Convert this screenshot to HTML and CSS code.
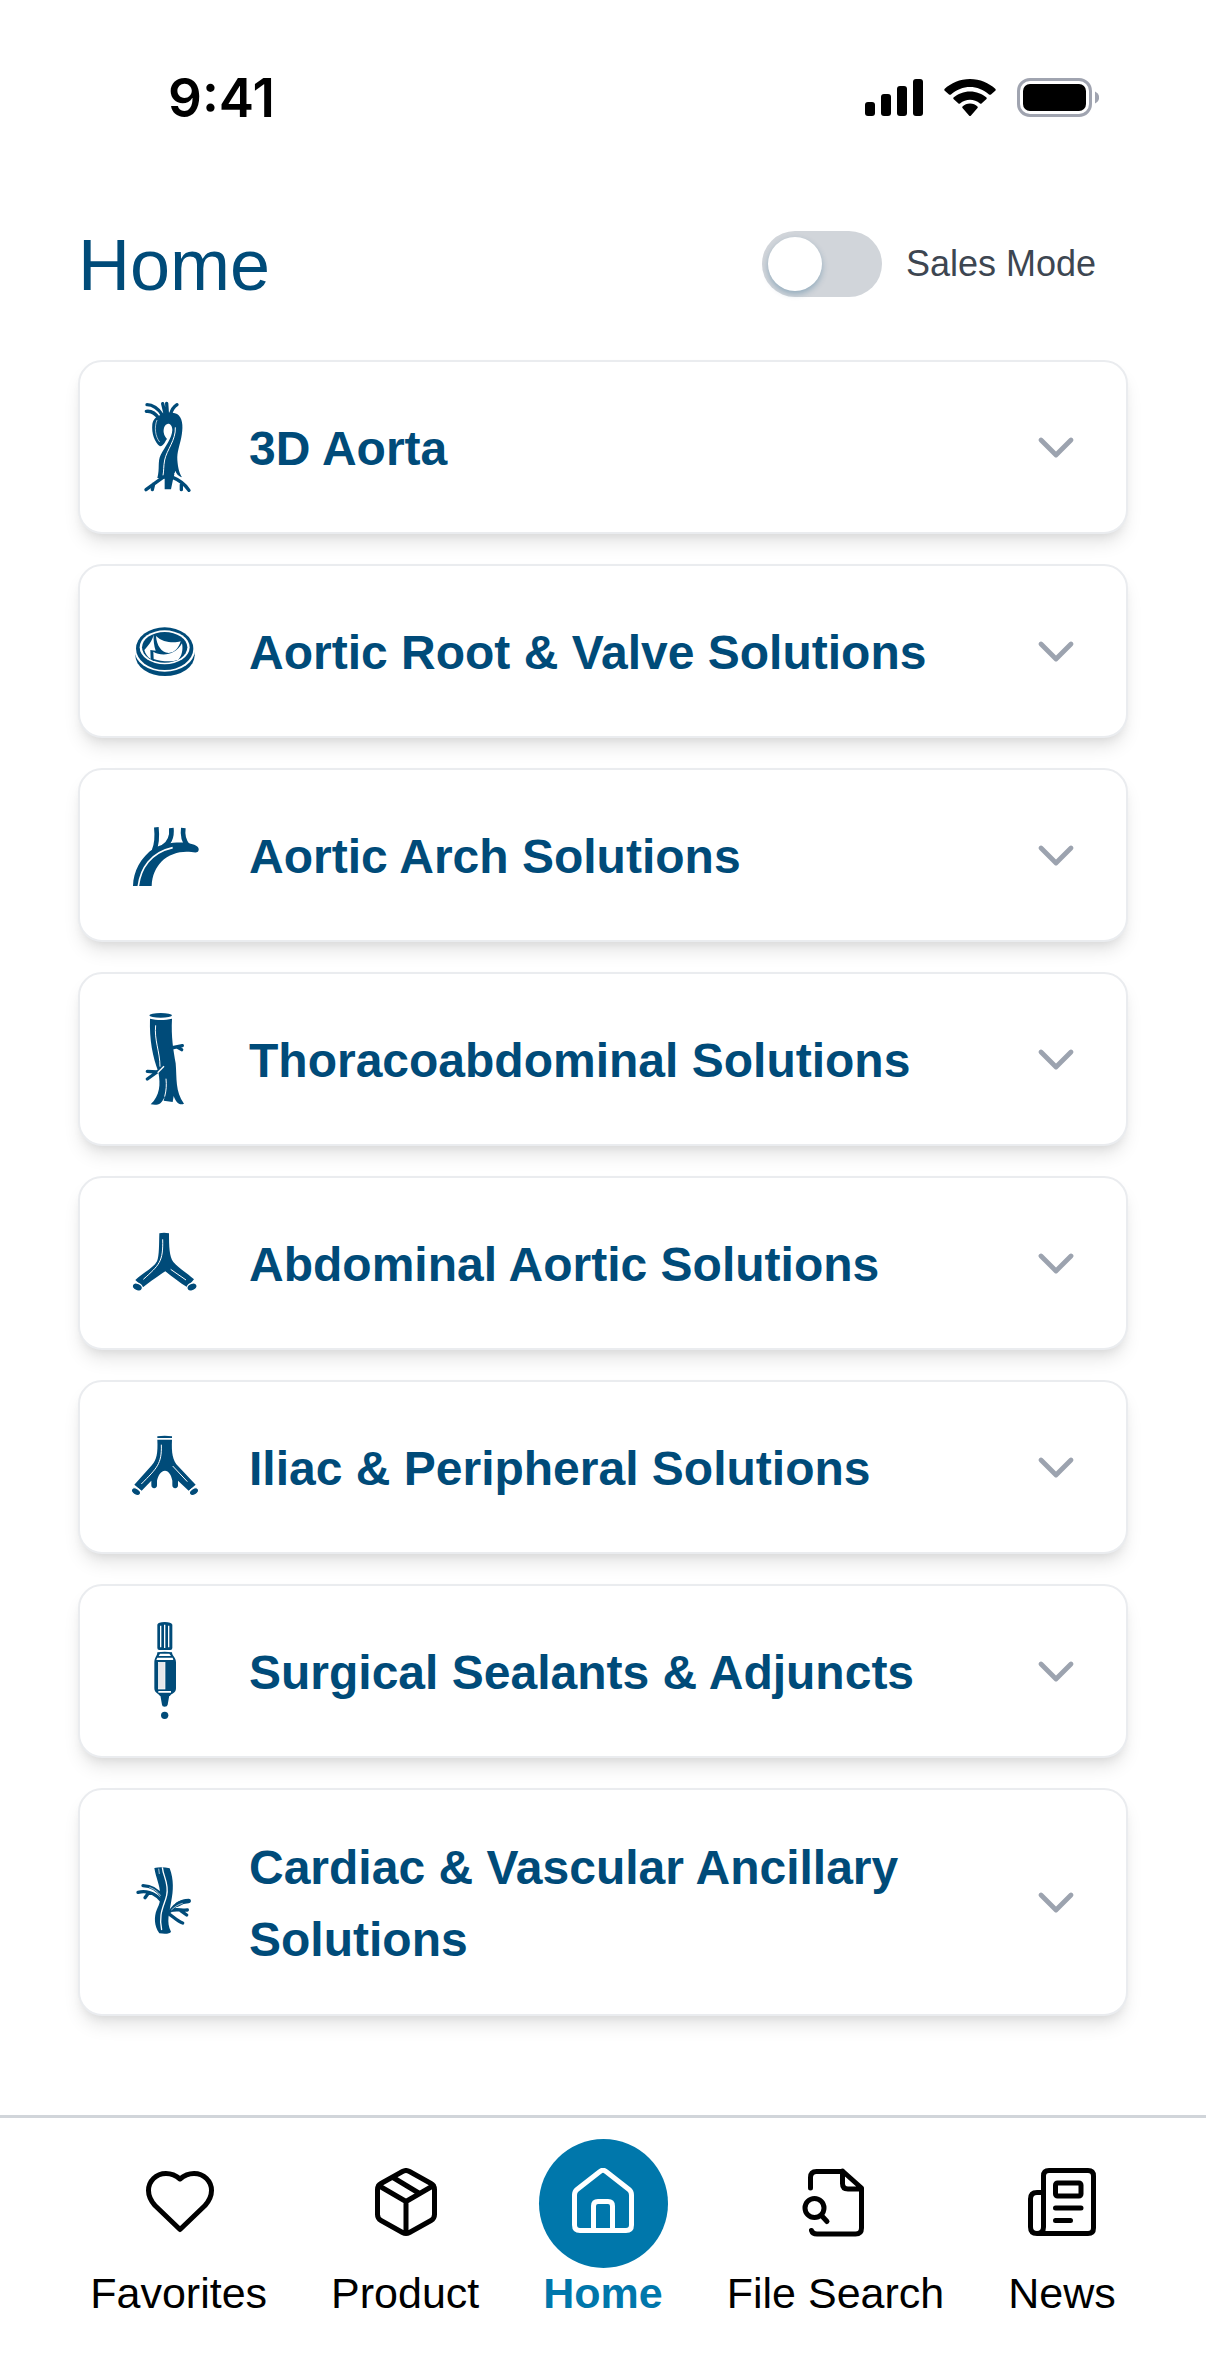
FILE: index.html
```html
<!DOCTYPE html>
<html lang="en">
<head>
  <meta charset="UTF-8" />
  <meta name="viewport" content="width=device-width, initial-scale=1.0"/>
  <title>Home</title>
  <link rel="stylesheet" href="styles.css">
</head>
<body>
  <div class="app">
    <div class="status-bar">
      <span class="time">9:41</span>
      <div class="status-icons">
        <svg width="58" height="37" viewBox="0 0 58 37">
          <rect x="0" y="23" width="10" height="14" rx="3"/>
          <rect x="16" y="15" width="10" height="22" rx="3"/>
          <rect x="32" y="7" width="10" height="30" rx="3"/>
          <rect x="48" y="0" width="10" height="37" rx="3"/>
        </svg>
        <svg width="52" height="37" viewBox="0 0 52 37">
          <path d="M26 0C36 0 45 4 51.500 10Q52 11 51.500 11.500L47 15.500Q46 16 45 15.500C34 5.500 18 5.500 7 15.500Q6 16 5 15.500L.5 11.500Q0 11 .5 10C7 4 16 0 26 0Z"/>
          <path d="M26 12.500C32.500 12.500 38 15 42.500 18.500Q43 19.500 42.500 20L37.500 24.500Q37 25 36 24.500C30 19.500 22 19.500 16 24.500Q15 25 14.500 24.500L9.500 20Q9 19.500 9.500 18.500C14 15 19.500 12.500 26 12.500Z"/>
          <path d="M26 24.500C29 24.500 31.500 25.500 33.500 27.500Q34 28.500 33.500 29L27 36.500Q26 37.500 25 36.500L18.500 29Q18 28.500 18.500 27.500C20.500 25.500 23 24.500 26 24.500Z"/>
        </svg>
        <svg width="82" height="39" viewBox="0 0 82 39">
          <rect x="1.500" y="1.500" width="72" height="36" rx="11.500" fill="none" stroke="#a0a4b0" stroke-width="3"/>
          <rect x="6" y="6" width="63" height="27" rx="7"/>
          <path d="M78 13.500V25.500C83.500 23 83.500 16 78 13.500Z" fill="#a0a4b0"/>
        </svg>
      </div>
    </div>

    <header class="header">
      <h1>Home</h1>
      <div class="sales-mode">
        <input type="checkbox" id="sales-mode" class="toggle">
        <label for="sales-mode">Sales Mode</label>
      </div>
    </header>

    <main class="cards">
      <button class="card" type="button">
        <svg class="card-icon" viewBox="30 36 270 270">
          <path d="M150 169C134 158 124 130 127 102C129 90 138 80 150 76C162 66 195 64 206 76C220 90 219 118 214 142C208 172 201 185 202 210C204 235 208 250 216 262C206 260 199 252 196 242L190 264L183 298H164V266L142 264C150 235 142 215 152 195C165 170 186 145 187 120C187 106 180 101 174 101C164 103 160 115 161 127C162 135 166 142 171 147C166 152 162 168 150 169Z"/>
          <path class="line" stroke-width="10" d="M111 44C127 44 146 56 156 74M109 64C124 62 138 72 147 86M158 41L165 70M170 40L172 70M201 44C192 50 185 60 182 72M162 260L108 299M131 282L127 299M188 262C208 270 226 284 237 301M214 284V299"/>
          <path class="cut" stroke-width="3" d="M196 112C198 150 170 180 164 210C160 230 162 242 159 256"/>
          <path class="cut" stroke-width="2" d="M141 90C132 112 136 140 149 156M192 250L214 264"/>
        </svg>
        <span class="card-title">3D Aorta</span>
        <svg class="chevron" viewBox="0 0 24 24"><path d="M4.500 8.500L12 16L19.500 8.500"/></svg>
      </button>

      <button class="card" type="button">
        <svg class="card-icon" viewBox="30 18 270 270">
          <ellipse cx="165" cy="166" rx="89" ry="62"/>
          <ellipse cx="164" cy="152" rx="90" ry="63" fill="#fff"/>
          <ellipse cx="164" cy="146" rx="86" ry="64"/>
          <ellipse cx="164" cy="142" rx="75" ry="51" fill="#fff"/>
          <ellipse cx="164" cy="142" rx="68" ry="46"/>
          <path fill="#fff" d="M131 104C127 122 114 138 103 150C106 162 112 170 122 177L121 150L137 152C132 138 130 120 131 104Z"/>
          <path fill="#fff" d="M138 108C158 128 192 130 212 124C206 144 194 158 176 159C154 158 140 136 138 108Z"/>
          <path fill="#fff" d="M130 155C152 169 196 168 216 130C220 150 215 170 204 180C184 187 152 184 131 177Z"/>
        </svg>
        <span class="card-title">Aortic Root &amp; Valve Solutions</span>
        <svg class="chevron" viewBox="0 0 24 24"><path d="M4.500 8.500L12 16L19.500 8.500"/></svg>
      </button>

      <button class="card" type="button">
        <svg class="card-icon" viewBox="30 30 270 270">
          <path d="M69 258C70 215 92 172 132 145C160 128 215 124 242 131C258 135 268 140 266 150C264 160 254 157 244 156C215 152 178 160 154 185C138 202 126 225 125 258Z"/>
          <path class="line butt" stroke-width="14" d="M139 82C142 110 142 130 132 152M184 84C187 112 178 130 158 142M220 84C217 105 220 122 234 138"/>
          <path class="cut" stroke-width="5" d="M85 258C92 205 122 158 188 143"/>
        </svg>
        <span class="card-title">Aortic Arch Solutions</span>
        <svg class="chevron" viewBox="0 0 24 24"><path d="M4.500 8.500L12 16L19.500 8.500"/></svg>
      </button>

      <button class="card" type="button">
        <svg class="card-icon" viewBox="30 42 270 270">
          <ellipse cx="152" cy="46" rx="34" ry="7"/>
          <path d="M120 56C140 61 165 61 186 56C183 110 190 150 197 190C201 235 195 275 222 311C208 318 197 305 191 288L188 306L161 302L164 290C154 314 142 317 122 313C150 285 152 255 145 215C128 170 118 120 120 56Z"/>
          <path class="line" stroke-width="10" d="M184 144L217 137M203 142L215 149M158 204L112 237M140 216L112 214"/>
          <path class="cut" stroke-width="3" d="M137 76C132 120 150 155 150 200M168 236C170 256 169 270 164 290"/>
          <path class="cut" stroke-width="4" d="M162 199L143 218"/>
        </svg>
        <span class="card-title">Thoracoabdominal Solutions</span>
        <svg class="chevron" viewBox="0 0 24 24"><path d="M4.500 8.500L12 16L19.500 8.500"/></svg>
      </button>

      <button class="card" type="button">
        <svg class="card-icon" viewBox="30 24 270 270">
          <path d="M148 70Q162 67 177 70C177 110 178 140 190 156C205 174 232 190 252 208L232 232C208 217 185 200 166 184C148 196 122 214 99 232L76 210C98 188 130 175 141 154C148 138 147 100 148 70Z"/>
          <ellipse class="ring" cx="82" cy="231" rx="16" ry="11" transform="rotate(26 82 231)"/>
          <ellipse class="ring" cx="246" cy="231" rx="16" ry="11" transform="rotate(-26 246 231)"/>
          <path class="cut" stroke-width="3" d="M158 88C160 155 148 165 100 208M182 178L228 210"/>
        </svg>
        <span class="card-title">Abdominal Aortic Solutions</span>
        <svg class="chevron" viewBox="0 0 24 24"><path d="M4.500 8.500L12 16L19.500 8.500"/></svg>
      </button>

      <button class="card" type="button">
        <svg class="card-icon" viewBox="30 636 270 270">
          <path d="M142 679Q164 676 186 679V684H142Z"/>
          <path d="M142 689H186C184 728 188 752 204 768L257 824L236 842L204 812V826A8 8 0 0 1 187 826V812C184 795 176 782 165 782C152 782 144 798 141 812V826A8 8 0 0 1 124 826V812L95 842L73 824L126 765C140 750 144 728 142 689Z"/>
          <ellipse class="ring" cx="78" cy="845" rx="15" ry="10" transform="rotate(32 78 845)"/>
          <ellipse class="ring" cx="252" cy="845" rx="15" ry="10" transform="rotate(-32 252 845)"/>
          <path class="cut" stroke-width="3" d="M154 704C156 762 140 775 94 822M188 768L232 815"/>
        </svg>
        <span class="card-title">Iliac &amp; Peripheral Solutions</span>
        <svg class="chevron" viewBox="0 0 24 24"><path d="M4.500 8.500L12 16L19.500 8.500"/></svg>
      </button>

      <button class="card" type="button">
        <svg class="card-icon" viewBox="30 48 270 270">
          <path d="M142 44Q144 36 164 36T187 44V114Q187 120 181 120H148Q142 120 142 114Z"/>
          <path class="cut" stroke-width="4" d="M152 47V112M164 44V114M176 47V112"/>
          <path d="M142 127Q164 124 186 127C186 138 198 142 198 158V235C198 250 184 250 180 258H150C145 250 133 248 133 235V158C133 142 142 138 142 127Z"/>
          <path fill="#fff" d="M150 131H178L183 138H146ZM142 143H188L190 150H139ZM145 243H183V248H145Z"/>
          <rect x="145" y="157" width="20" height="80" fill="#e5e7eb" stroke="#fff" stroke-width="2"/>
          <path d="M151 256H178L173 284Q172 290 164 290T156 284Z"/>
          <circle cx="164" cy="316" r="11"/>
        </svg>
        <span class="card-title">Surgical Sealants &amp; Adjuncts</span>
        <svg class="chevron" viewBox="0 0 24 24"><path d="M4.500 8.500L12 16L19.500 8.500"/></svg>
      </button>

      <button class="card" type="button">
        <svg class="card-icon" viewBox="30 21 270 270">
          <path d="M133 54Q155 49 179 55C192 88 190 125 184 152C178 190 168 215 183 245Q178 254 148 250C132 228 132 200 140 180C150 160 152 150 150 130C150 105 138 85 133 54Z"/>
          <path class="line" stroke-width="10" d="M99 107C122 108 142 118 157 140M84 127C105 122 132 126 152 150M116 128L105 143M180 184C194 164 215 152 237 153M182 181C202 176 215 182 232 180M212 182L230 195M174 190C188 198 202 214 218 219"/>
          <path class="line" stroke-width="13" d="M202 164C214 156 224 153 236 153"/>
          <path class="cut" stroke-width="4" d="M157 52C160 82 178 100 170 136C164 165 144 190 155 240"/>
          <path class="cut" stroke-width="2" d="M146 56L148 72M118 112C134 117 144 126 152 137M184 180C195 170 205 163 218 160"/>
        </svg>
        <span class="card-title">Cardiac &amp; Vascular Ancillary Solutions</span>
        <svg class="chevron" viewBox="0 0 24 24"><path d="M4.500 8.500L12 16L19.500 8.500"/></svg>
      </button>
    </main>

    <nav class="bottom-nav">
      <a href="#" class="nav-item">
        <span class="nav-icon">
          <svg viewBox="0 0 72 72"><path d="M37 11C33 7.500 28 5.500 23 5.500C13 5.500 5.500 13 5.500 22.500C5.500 28.500 8 33 12 37.500L37 61.500L62 37.500C66 33 68.500 28.500 68.500 22.500C68.500 13 61 5.500 51 5.500C46 5.500 41 7.500 37 11Z"/></svg>
        </span>
        Favorites
      </a>
      <a href="#" class="nav-item">
        <span class="nav-icon">
          <svg viewBox="-1 0 72 72"><path d="M32.500 3.500Q36 1.500 39.500 3.500L61 15.500Q64.500 17.500 64.500 21.500V46.500Q64.500 50.500 61 52.500L39.500 64.500Q36 66.500 32.500 64.500L11 52.500Q7.500 50.500 7.500 46.500V21.500Q7.500 17.500 11 15.500ZM8.500 17.500L36 33.500L63.500 17.500M36 33.500V65.500M23 9.500L49.500 25.500"/></svg>
        </span>
        Product
      </a>
      <a href="#" class="nav-item active">
        <span class="nav-icon">
          <svg viewBox="0 0 72 72"><path d="M33 3.500Q36 1 39 3.500L62 21.500Q64.500 23.500 64.500 27V57Q64.500 62.500 59 62.500H13Q7.500 62.500 7.500 57V27Q7.500 23.500 10 21.500ZM26.500 62.500V38Q26.500 33.500 31 33.500H41Q45.500 33.500 45.500 38V62.500"/></svg>
        </span>
        Home
      </a>
      <a href="#" class="nav-item">
        <span class="nav-icon">
          <svg viewBox="-1 0 72 72"><path d="M10.500 20V9.500Q10.500 3.500 16.500 3.500H43L61.500 20V60Q61.500 66 55.500 66H17Q12.500 66 11.500 62.500M42.500 3V15.500Q42.500 21 48 21H61.500"/><circle cx="14.500" cy="40" r="9.500"/><path d="M21.500 47.500L27 53.500"/></svg>
        </span>
        File Search
      </a>
      <a href="#" class="nav-item">
        <span class="nav-icon">
          <svg viewBox="0 0 72 72"><path d="M11 65.500H62Q67.500 65.500 67.500 60V8Q67.500 2.500 62 2.500H23Q17.500 2.500 17.500 8V59Q17.500 65.500 11 65.500Q4.500 65.500 4.500 59V31Q4.500 24.500 11 24.500H17.500M29.500 40H55M29.500 52.500H44.500"/><rect x="29.500" y="15" width="25.500" height="13" rx="2"/></svg>
        </span>
        News
      </a>
    </nav>
  </div>
</body>
</html>
```
FILE: styles.css
```css
:root {
  --primary: #004b79;
  --accent: #0077ab;
  --border: #eaecef;
  --line: #d1d5da;
  --muted: #9ca3af;
  --text: #3d4651;
}

* {
  box-sizing: border-box;
}

body {
  margin: 0;
  background: #fff;
  color: #000;
  font-family: "Liberation Sans", Arial, sans-serif;
}

.app {
  display: flex;
  flex-direction: column;
  min-height: 100vh;
}

/* Status bar */
.status-bar {
  display: flex;
  align-items: center;
  justify-content: space-between;
  height: 195px;
  padding: 0 107px 0 168px;
}

.time {
  font-family: Inter, sans-serif;
  font-size: 53px;
  font-weight: 600;
}

.status-icons {
  display: flex;
  align-items: center;
  gap: 21px;
}

/* Header */
.header {
  display: flex;
  align-items: center;
  justify-content: space-between;
  padding: 20px 110px 47px 78px;
}

.header h1 {
  margin: 0;
  padding-top: 2px;
  color: var(--primary);
  font-size: 72px;
  font-weight: 400;
  line-height: 96px;
}

.sales-mode {
  display: flex;
  align-items: center;
  gap: 24px;
  color: var(--text);
  font-size: 36px;
}

.toggle {
  appearance: none;
  width: 120px;
  height: 66px;
  margin: 0;
  padding: 6px;
  border-radius: 33px;
  background: var(--line);
  cursor: pointer;
}

.toggle::before {
  content: "";
  display: block;
  width: 54px;
  height: 54px;
  border-radius: 50%;
  background: #fff;
  box-shadow: 0 3px 6px rgba(0, 75, 121, 0.3);
}

.toggle:checked {
  background: var(--accent);
}

.toggle:checked::before {
  margin-left: auto;
}

/* Category cards */
.cards {
  display: flex;
  flex-direction: column;
  gap: 30px;
  padding: 0 78px 99px;
}

.card {
  display: flex;
  align-items: center;
  gap: 39px;
  width: 100%;
  min-height: 174px;
  padding: 38px 46px 38px 40px;
  border: 2px solid var(--border);
  border-radius: 24px;
  background: #fff;
  box-shadow: 0 12px 18px -3px rgba(0, 0, 0, 0.1), 0 6px 12px -6px rgba(0, 0, 0, 0.1);
  color: var(--primary);
  font-family: inherit;
  text-align: left;
  cursor: pointer;
}

.card-title {
  flex: 1;
  padding-top: 4px;
  font-size: 48px;
  font-weight: 700;
  line-height: 72px;
}

.card-icon {
  flex: none;
  width: 90px;
  height: 90px;
  overflow: visible;
  fill: currentColor;
}

.card-icon .line {
  fill: none;
  stroke: currentColor;
  stroke-linecap: round;
}

.card-icon .butt {
  stroke-linecap: butt;
}

.card-icon .cut {
  fill: none;
  stroke: #fff;
}

.card-icon .ring {
  stroke: #fff;
  stroke-width: 4;
}

.chevron {
  flex: none;
  width: 48px;
  height: 48px;
  fill: none;
  stroke: var(--muted);
  stroke-width: 2.4;
  stroke-linecap: round;
  stroke-linejoin: round;
}

/* Bottom navigation */
.bottom-nav {
  display: flex;
  justify-content: center;
  gap: 64px;
  margin-top: auto;
  padding: 21px 0 40px;
  border-top: 3px solid var(--line);
}

.nav-item {
  display: flex;
  flex-direction: column;
  align-items: center;
  color: #000;
  font-size: 43px;
  line-height: 50px;
  text-decoration: none;
  white-space: nowrap;
}

.nav-icon {
  display: flex;
  align-items: center;
  justify-content: center;
  width: 129px;
  height: 129px;
  margin: 0 -12px;
  border-radius: 50%;
}

.nav-icon svg {
  width: 72px;
  height: 72px;
  fill: none;
  stroke: currentColor;
  stroke-width: 5;
  stroke-linecap: round;
  stroke-linejoin: round;
}

.nav-item.active {
  color: var(--accent);
  font-weight: 700;
}

.active .nav-icon {
  background: var(--accent);
  color: #fff;
}
```
